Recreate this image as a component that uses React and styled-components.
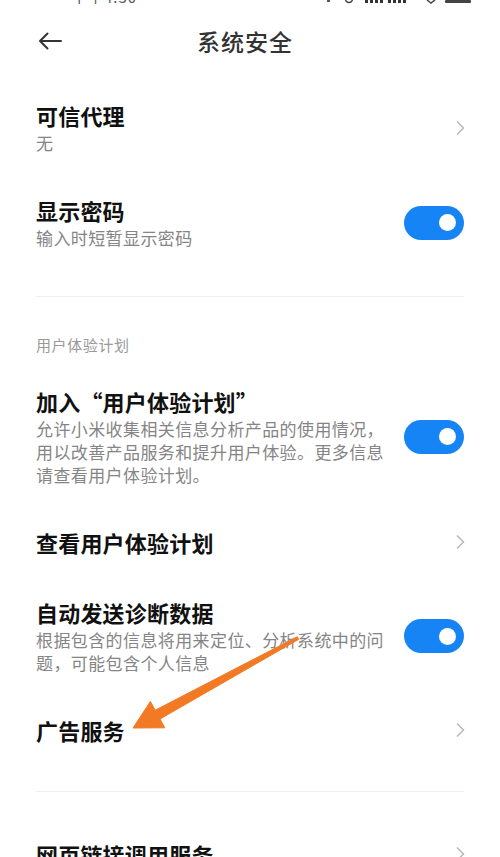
import React from "react";
import styled, { createGlobalStyle } from "styled-components";

const GlobalStyle = createGlobalStyle`
  html, body {
    margin: 0;
    padding: 0;
    background: #ffffff;
  }
  body {
    font-family: "Noto Sans CJK SC", "Noto Sans", sans-serif;
    color: #111;
  }
`;

const Page = styled.div`
  position: relative;
  width: 500px;
  height: 857px;
  overflow: hidden;
  background: #fff;
`;

const StatusStrip = styled.div`
  height: 4px;
  overflow: hidden;
  display: flex;
  align-items: flex-end;
  justify-content: space-between;
  padding: 0 28px 0 72px;
`;

const StatusTime = styled.span`
  font-size: 15px;
  line-height: 15px;
  margin-bottom: 0;
  color: #555;
  letter-spacing: 1px;
`;

const NavBar = styled.div`
  height: 74px;
  display: grid;
  grid-template-columns: 60px 1fr 70px;
  align-items: center;
  padding: 0 36px;
`;

const BackButton = styled.button`
  border: none;
  background: none;
  padding: 0;
  margin-left: 2px;
  width: 26px;
  height: 20px;
  display: flex;
  align-items: center;
  cursor: pointer;
`;

const NavTitle = styled.h1`
  margin: 0;
  text-align: center;
  font-size: 23px;
  font-weight: 500;
  color: #333;
  letter-spacing: 1px;
`;

const List = styled.div`
  padding: 2px 36px 0;
`;

const Row = styled.div`
  display: flex;
  align-items: center;
  padding: 21px 0;
`;

const TextBlock = styled.div`
  flex: 1;
  min-width: 0;
  padding-right: ${(p) => (p.withToggle ? "13px" : "0")};
`;

const ItemTitle = styled.div`
  font-size: 22px;
  line-height: 28px;
  font-weight: 700;
  color: #111;
  letter-spacing: 0.2px;
`;

const ItemSub = styled.div`
  margin-top: 2px;
  font-size: 17px;
  line-height: 23px;
  color: #858585;
  letter-spacing: 0.4px;
`;

const SectionHeader = styled.div`
  padding: 11px 0;
  font-size: 15px;
  line-height: 20px;
  color: #9a9a9a;
  letter-spacing: 0.6px;
`;

const Divider = styled.div`
  height: 1px;
  background: #eeeeee;
  margin: 26px 0 27px;
`;

const Toggle = styled.div`
  flex: none;
  width: 60px;
  height: 34px;
  border-radius: 17px;
  background: ${(p) => (p.on ? "#1784f5" : "#e3e3e3")};
  display: flex;
  align-items: center;
  justify-content: ${(p) => (p.on ? "flex-end" : "flex-start")};
  padding: 0 8px;
  box-sizing: border-box;
`;

const Knob = styled.div`
  width: 17px;
  height: 17px;
  border-radius: 50%;
  background: #fff;
`;

const Chevron = styled.div`
  flex: none;
  width: 12px;
  display: flex;
  justify-content: flex-end;
  margin-right: -1px;
`;

const ArrowOverlay = styled.svg`
  position: absolute;
  left: 0;
  top: 0;
  pointer-events: none;
`;

function ChevronIcon() {
  return (
    <Chevron>
      <svg width="10" height="16" viewBox="0 0 10 16">
        <path d="M2 1.5 L8.5 8 L2 14.5" fill="none" stroke="#b8b8b8" strokeWidth="1.5" />
      </svg>
    </Chevron>
  );
}

function Switch({ on }) {
  return (
    <Toggle on={on}>
      <Knob />
    </Toggle>
  );
}

function SettingRow({ title, sub, toggle, chevron }) {
  return (
    <Row>
      <TextBlock withToggle={toggle !== undefined}>
        <ItemTitle>{title}</ItemTitle>
        {sub && <ItemSub>{sub}</ItemSub>}
      </TextBlock>
      {toggle !== undefined && <Switch on={toggle} />}
      {chevron && <ChevronIcon />}
    </Row>
  );
}

export default function App() {
  return (
    <Page>
      <GlobalStyle />
      <StatusStrip>
        <StatusTime>下午4:30</StatusTime>
        <svg width="145" height="4" viewBox="0 0 145 4">
          <rect x="0" y="0" width="3" height="2" fill="#555" />
          <circle cx="22" cy="-1" r="3.5" fill="none" stroke="#444" strokeWidth="1.5" />
          <rect x="38" y="0" width="3" height="3" fill="#333" />
          <rect x="43" y="0" width="3" height="3" fill="#333" />
          <rect x="48" y="0" width="3" height="3" fill="#333" />
          <rect x="53" y="0" width="3" height="3" fill="#333" />
          <rect x="61" y="0" width="3" height="3" fill="#333" />
          <rect x="66" y="0" width="3" height="3" fill="#333" />
          <rect x="71" y="0" width="3" height="3" fill="#333" />
          <rect x="76" y="0" width="3" height="3" fill="#333" />
          <path d="M100 0 L104 3 L108 0" fill="none" stroke="#444" strokeWidth="1.5" />
          <rect x="118" y="0" width="26" height="3" rx="1" fill="#444" />
        </svg>
      </StatusStrip>

      <NavBar>
        <BackButton aria-label="返回">
          <svg width="24" height="18" viewBox="0 0 24 18">
            <path d="M23 9 H2 M9.5 1.5 L2 9 L9.5 16.5" fill="none" stroke="#333" strokeWidth="2" strokeLinecap="round" strokeLinejoin="round" />
          </svg>
        </BackButton>
        <NavTitle>系统安全</NavTitle>
        <span />
      </NavBar>

      <List>
        <SettingRow title="可信代理" sub="无" chevron />
        <SettingRow title="显示密码" sub="输入时短暂显示密码" toggle={true} />

        <Divider />

        <SectionHeader>用户体验计划</SectionHeader>
        <SettingRow
          title="加入“用户体验计划”"
          sub="允许小米收集相关信息分析产品的使用情况，用以改善产品服务和提升用户体验。更多信息请查看用户体验计划。"
          toggle={true}
        />
        <SettingRow title="查看用户体验计划" chevron />
        <SettingRow
          title="自动发送诊断数据"
          sub="根据包含的信息将用来定位、分析系统中的问题，可能包含个人信息"
          toggle={true}
        />
        <SettingRow title="广告服务" chevron />

        <Divider />

        <SettingRow title="网页链接调用服务" chevron />
      </List>

      <ArrowOverlay width="500" height="857" viewBox="0 0 500 857">
        <polygon
          points="297.3,636.7 155.2,710.2 150.4,701.4 133,728 164.8,727.8 160,719 298.7,639.3"
          fill="#f27a25"
          strokeLinejoin="round"
          stroke="#f27a25"
          strokeWidth="1"
        />
      </ArrowOverlay>
    </Page>
  );
}
